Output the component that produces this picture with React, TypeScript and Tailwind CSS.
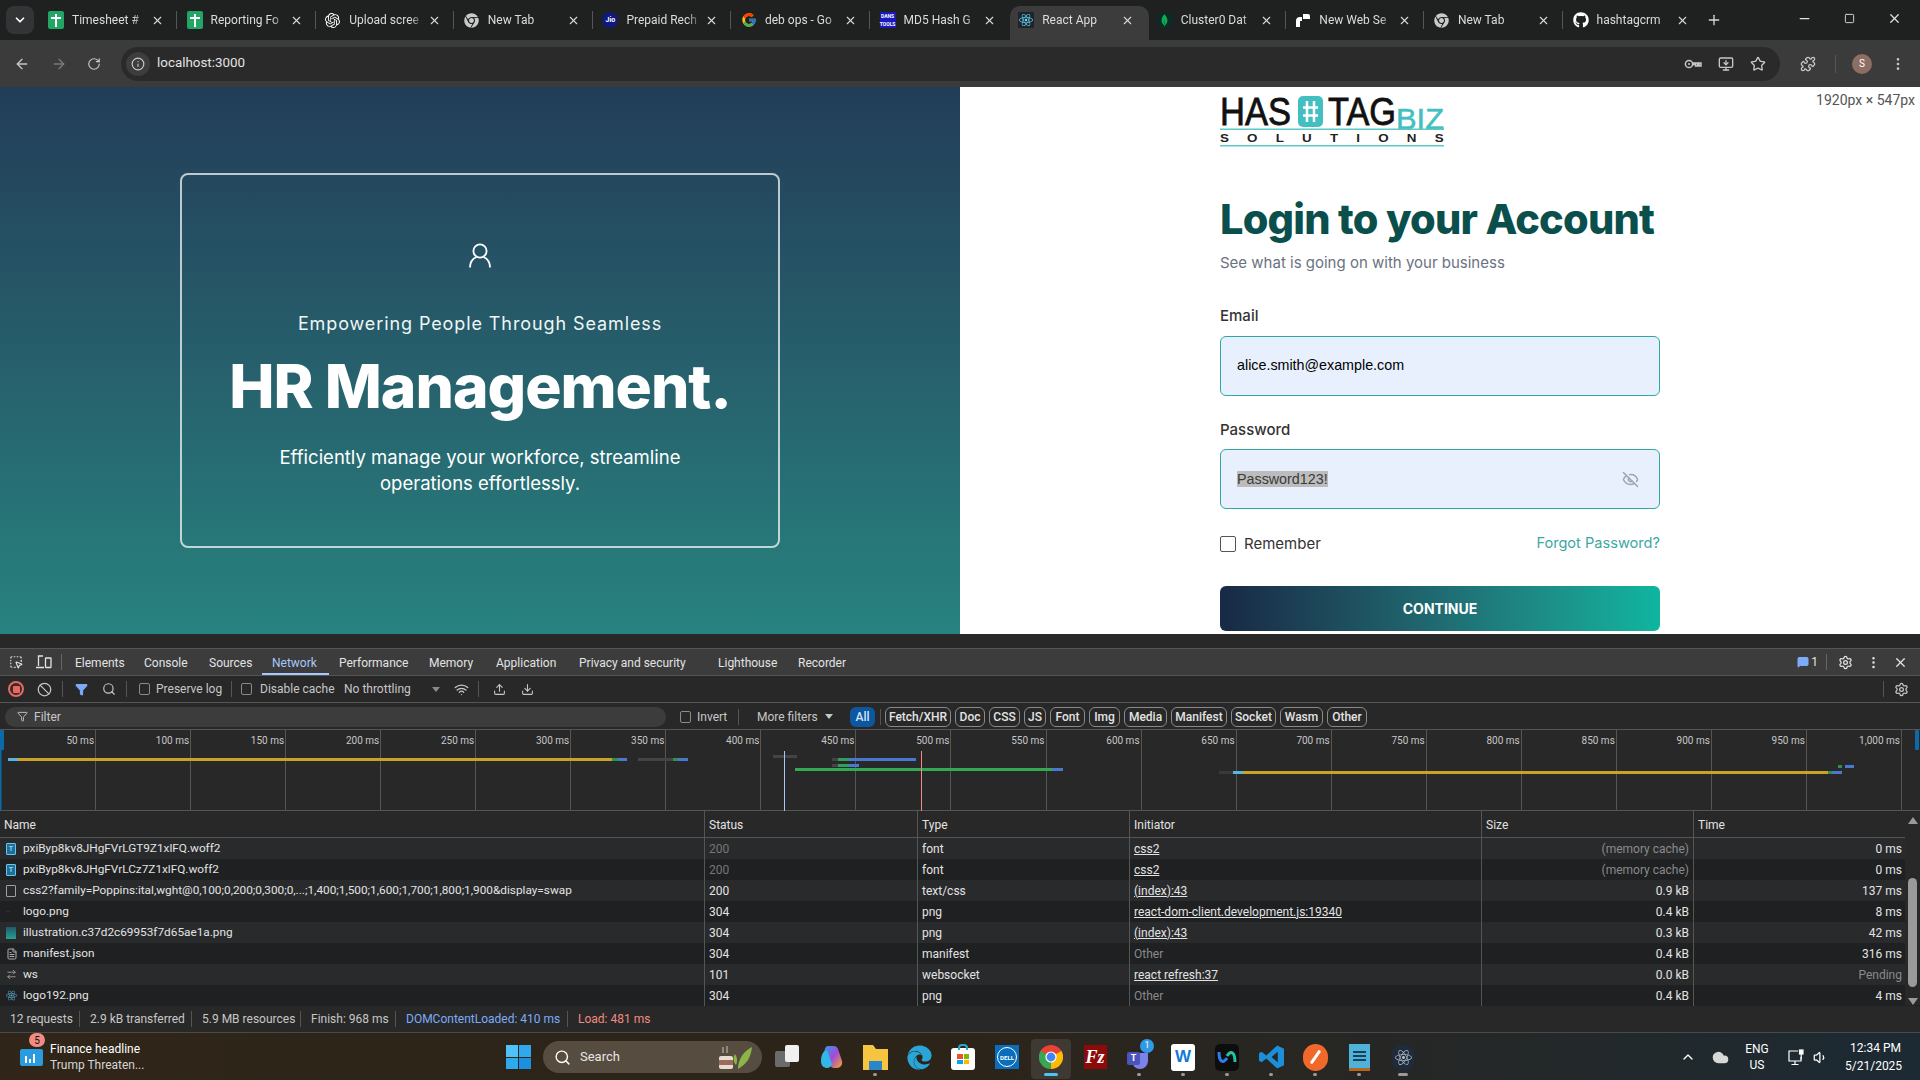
import React from 'react';
import {
  ArrowLeft,
  ArrowRight,
  ChevronDown,
  ChevronUp,
  Ban,
  Download,
  EyeOff,
  FileText,
  Filter,
  Info,
  Minus,
  MoreVertical,
  Plus,
  Puzzle,
  RotateCw,
  Search,
  Settings,
  Square,
  Star,
  Upload,
  Volume1,
  Wifi,
  X,
  MousePointerSquareDashed,
  ArrowRightLeft,
  MonitorDown,
  MessageSquare,
  Cloud,
} from 'lucide-react';
import { FaChrome, FaEdge, FaGithub, FaReact } from 'react-icons/fa';
import { FcGoogle } from 'react-icons/fc';
import { SiMongodb, SiOpenai } from 'react-icons/si';

const poppins = "font-['Inter','Liberation_Sans',sans-serif]";

const ChromeLogo = ({ size = 24 }: { size?: number }) => (
  <svg width={size} height={size} viewBox="0 0 24 24">
    <circle cx="12" cy="12" r="12" fill="#ea4335" />
    <path d="M12 12 1.6 6A12 12 0 0 0 12 24z" fill="#34a853" />
    <path d="M12 12V24A12 12 0 0 0 22.4 6z" fill="#fbbc04" />
    <circle cx="12" cy="12" r="5.6" fill="#fff" />
    <circle cx="12" cy="12" r="4.4" fill="#4285f4" />
  </svg>
);

const SheetsIcon = () => (
  <div className="w-[16px] h-[18px] rounded-[2px] bg-[#23a566] relative">
    <div className="w-[10px] h-[2px] bg-white absolute left-[3px] top-[6px]" />
    <div className="w-[2px] h-[13px] bg-white absolute left-[7px] top-[3px]" />
  </div>
);

const KeyIcon = () => (
  <svg width="18" height="16" viewBox="0 0 18 16" fill="none" stroke="currentColor" strokeWidth="1.5">
    <circle cx="5" cy="8" r="3.6" />
    <circle cx="5" cy="8" r="1" fill="currentColor" stroke="none" />
    <path d="M8.600 7H17v3h-2V8.500h-1.500V10h-2V8.500H8.600" />
  </svg>
);

const DeviceIcon = () => (
  <svg width="16" height="14" viewBox="0 0 16 14" fill="none" stroke="currentColor" strokeWidth="1.3" className="ml-[13px] shrink-0">
    <path d="M7 1H2.500v10M0 12.500h8" />
    <rect x="9.500" y="3" width="5.500" height="9.500" rx="0.5" />
  </svg>
);

const PersonIcon = () => (
  <svg width="22" height="25" viewBox="0 0 22 25" fill="none" stroke="currentColor" strokeWidth="1.8" className="mt-[68px]">
    <circle cx="11" cy="8" r="6.600" />
    <path d="M1 24.500C1 19 4 15.500 7.500 14M21 24.500C21 19 18 15.500 14.500 14" />
  </svg>
);

const NetworkIcon = () => (
  <svg width="17" height="17" viewBox="0 0 17 17" fill="none" stroke="currentColor" strokeWidth="1.2" className="ml-[16px]">
    <path d="M10 2H1v10h12V8M7 12v3M3.500 15.500h7" />
    <rect x="11.500" y="1" width="3.500" height="4" fill="currentColor" />
    <path d="M13.200 5v5.500" />
  </svg>
);

const tabs: { title: string; icon: React.ReactNode; active?: boolean }[] = [
  { title: 'Timesheet #', icon: <SheetsIcon /> },
  { title: 'Reporting Fo', icon: <SheetsIcon /> },
  { title: 'Upload scree', icon: <SiOpenai size={15} className="text-white" /> },
  { title: 'New Tab', icon: <FaChrome size={15} className="text-[#c9c9c9]" /> },
  {
    title: 'Prepaid Rech',
    icon: (
      <div className="w-[16px] h-[16px] rounded-full bg-[#0f1a7a] text-white text-[7px] font-bold flex items-center justify-center">
        Jio
      </div>
    ),
  },
  { title: 'deb ops - Go', icon: <FcGoogle size={16} /> },
  {
    title: 'MD5 Hash G',
    icon: (
      <div className="w-[16px] h-[16px] bg-[#1a1ab8] text-white text-[5px] leading-[8px] font-bold text-center">
        <div>DANS</div>
        <div>TOOLS</div>
      </div>
    ),
  },
  {
    title: 'React App',
    active: true,
    icon: (
      <div className="w-[16px] h-[16px] bg-[#20232a] flex items-center justify-center">
        <FaReact size={14} className="text-[#61dafb]" />
      </div>
    ),
  },
  {
    title: 'Cluster0 Dat',
    icon: (
      <div className="w-[16px] h-[16px] rounded-full bg-[#0b2b26] flex items-center justify-center">
        <SiMongodb size={13} className="text-[#13aa52]" />
      </div>
    ),
  },
  {
    title: 'New Web Se',
    icon: (
      <svg width="16" height="16" viewBox="0 0 16 16">
        <path d="M1 15V9a4 4 0 0 1 4-4h2v4H5v6zM8 2h5a2 2 0 0 1 2 2v3H8z" fill="#fff" />
      </svg>
    ),
  },
  { title: 'New Tab', icon: <FaChrome size={15} className="text-[#c9c9c9]" /> },
  { title: 'hashtagcrm', icon: <FaGithub size={16} className="text-white" /> },
];

const TabStrip = () => (
  <div className="h-[40px] bg-[#1f2020] flex items-center text-[12px] text-[#dcdcdc] shrink-0">
    <div className="w-[40px] pl-[6px] shrink-0">
      <div className="w-[28px] h-[28px] rounded-lg bg-[#333435] flex items-center justify-center">
        <ChevronDown size={14} strokeWidth={3} className="text-white" />
      </div>
    </div>
    {tabs.map((t, i) => (
      <div
        key={i}
        className={
          t.active
            ? 'w-[138.6px] h-[34px] mt-[6px] pb-[6px] shrink-0 flex items-center pl-[8px] bg-[#3c3c3c] rounded-t-[10px]'
            : 'w-[138.6px] h-[34px] mt-[6px] pb-[6px] shrink-0 flex items-center pl-[8px]'
        }
      >
        <div className="w-[24px] shrink-0 flex items-center">{t.icon}</div>
        <div className="w-[76px] overflow-hidden whitespace-nowrap [mask-image:linear-gradient(90deg,#000_80%,transparent)]">
          {t.title}
        </div>
        <X size={13} className="ml-[3px] text-[#d8d8d8] shrink-0" />
        {!t.active && tabs[i + 1] && !tabs[i + 1].active && <div className="w-px h-[18px] bg-[#555] ml-[12px]" />}
      </div>
    ))}
    <Plus size={16} className="ml-[3px] text-[#d8d8d8] shrink-0" />
    <div className="ml-auto flex items-center text-[#e0e0e0] pr-[18px] pb-[4px] gap-[32px]">
      <Minus size={15} />
      <Square size={11} />
      <X size={15} />
    </div>
  </div>
);

const AddressBar = () => (
  <div className="h-[47px] bg-[#3b3b3b] flex items-center shrink-0 text-[#c7c7c7]">
    <ArrowLeft size={16} className="ml-[14px] shrink-0" />
    <ArrowRight size={16} className="ml-[21px] shrink-0 text-[#7b7b7b]" />
    <RotateCw size={14} className="ml-[20px] shrink-0" />
    <div className="ml-[20px] w-[1659px] h-[34px] rounded-full bg-[#2a2a2a] flex items-center pl-[5px] shrink-0">
      <div className="w-[24px] h-[24px] rounded-full bg-[#3d3d3d] flex items-center justify-center">
        <Info size={14} />
      </div>
      <span className="ml-[7px] text-[13.4px] text-[#e3e3e3] font-['Roboto',sans-serif]">localhost:3000</span>
      <div className="ml-auto flex items-center gap-[16px] pr-[14px]">
        <KeyIcon />
        <MonitorDown size={16} />
        <Star size={16} />
      </div>
    </div>
    <Puzzle size={16} className="ml-[20px] shrink-0" />
    <div className="w-px h-[18px] bg-[#555] ml-[19px]" />
    <div className="ml-[16px] w-[20px] h-[20px] rounded-full bg-[#8d6e63] text-white text-[10px] flex items-center justify-center">
      S
    </div>
    <MoreVertical size={16} className="ml-[18px]" />
  </div>
);

const Logo = () => (
  <svg width="224" height="52" viewBox="0 0 224 52" className="block">
    <text x="0" y="30" fontFamily="Liberation Sans" fontSize="39" fill="#111" stroke="#111" strokeWidth="0.8" textLength="71" lengthAdjust="spacingAndGlyphs">
      HAS
    </text>
    <rect x="78" y="1" width="25" height="31" rx="5" fill="#43bfc1" />
    <path d="M87 6v21M94 6v21M83 12.500h15M83 20.500h15" stroke="#fff" strokeWidth="2.500" />
    <text x="108" y="30" fontFamily="Liberation Sans" fontSize="39" fill="#111" stroke="#111" strokeWidth="0.8" textLength="68" lengthAdjust="spacingAndGlyphs">
      TAG
    </text>
    <text x="176" y="33.500" fontFamily="Liberation Sans" fontSize="29" fill="#43bfc1" stroke="#43bfc1" strokeWidth="0.5" textLength="48" lengthAdjust="spacingAndGlyphs">
      BIZ
    </text>
    <rect x="0" y="33.500" width="224" height="1.5" fill="#5cc8c8" />
    <g transform="scale(1.3 1)">
      <text x="0" y="47" fontFamily="Liberation Sans" fontSize="10.300" fontWeight="700" fill="#222" textLength="172">
        SOLUTIONS
      </text>
    </g>
    <rect x="0" y="50" width="224" height="1.5" fill="#5cc8c8" />
  </svg>
);

const LoginPage = () => (
  <div className="h-[547px] flex shrink-0 overflow-hidden relative bg-white">
    <div className="w-[960px] shrink-0 bg-gradient-to-b from-[#223d58] to-[#27837f] pt-[86px] pl-[180px]">
      <div className="w-[600px] h-[375px] border-2 border-white/70 rounded-lg flex flex-col items-center text-white">
        <PersonIcon />
        <div className={`${poppins} mt-[43px] text-[18px] leading-[26px] tracking-[0.9px] text-[#eef6f6]`}>
          Empowering People Through Seamless
        </div>
        <div className={`${poppins} mt-[15px] text-[60.5px] leading-[68px] font-extrabold tracking-[-1px]`}>HR Management.</div>
        <div className={`${poppins} mt-[24px] text-[18.5px] leading-[26px] text-center w-[430px]`}>
          Efficiently manage your workforce, streamline operations effortlessly.
        </div>
      </div>
    </div>
    <div className="flex-1 pl-[260px] pt-[8px]">
      <div className="w-[440px]">
        <Logo />
        <h1 className={`${poppins} mt-[46px] text-[41.5px] leading-[52px] font-extrabold text-[#0a4f4c] tracking-[-0.8px] whitespace-nowrap`}>
          Login to your Account
        </h1>
        <p className={`${poppins} mt-[6px] text-[15px] leading-[24px] text-[#6b7280]`}>See what is going on with your business</p>
        <label className={`${poppins} block mt-[29px] text-[15px] leading-[24px] font-medium text-[#333]`}>Email</label>
        <div className="mt-[8px] h-[60px] rounded-md border-[1.5px] border-[#2da8a3] bg-[#e8f0fe] flex items-center pl-[16px] font-['Liberation_Sans',sans-serif] text-[14.3px] text-black">
          alice.smith@example.com
        </div>
        <label className={`${poppins} block mt-[22px] text-[15px] leading-[24px] font-medium text-[#333]`}>Password</label>
        <div className="mt-[7px] h-[60px] rounded-md border-[1.5px] border-[#2da8a3] bg-[#e8f0fe] flex items-center pl-[16px] pr-[20px] font-['Liberation_Sans',sans-serif] text-[14.3px] text-[#3a3a3a]">
          <span className="bg-[#bcbcbc] leading-[16px]">Password123!</span>
          <EyeOff size={17} className="ml-auto text-[#9ca3af]" />
        </div>
        <div className="mt-[26px] h-[18px] flex items-center">
          <div className="w-[16px] h-[16px] border border-[#555] rounded-[2px]" />
          <span className={`${poppins} ml-[8px] text-[15px] text-[#333]`}>Remember</span>
          <span className={`${poppins} ml-auto text-[14.6px] text-[#3da89f]`}>Forgot Password?</span>
        </div>
        <div className="mt-[33px] h-[45px] rounded-md bg-gradient-to-r from-[#182945] to-[#0eb5a0] flex items-center justify-center font-['Inter',sans-serif] text-[14px] font-bold text-white">
          CONTINUE
        </div>
      </div>
    </div>
    <div className="absolute right-[5px] top-[5px] bg-white text-[14px] leading-[16px] text-[#555] font-['Roboto',sans-serif]">
      1920px × 547px
    </div>
  </div>
);

const devTabs: [string, number][] = [
  ['Elements', 69],
  ['Console', 65],
  ['Sources', 63],
  ['Network', 67],
  ['Performance', 90],
  ['Memory', 67],
  ['Application', 83],
  ['Privacy and security', 139],
  ['Lighthouse', 80],
  ['Recorder', 70],
];

const DevTabs = () => (
  <div className="h-[28px] bg-[#3c3c3c] border-t border-b border-[#555] flex items-center shrink-0 text-[#e3e3e3]">
    <MousePointerSquareDashed size={14} className="ml-[9px] shrink-0" />
    <DeviceIcon />
    <div className="w-px h-[16px] bg-[#666] ml-[9px]" />
    <div className="ml-[13px] flex h-full">
      {devTabs.map(([name, w]) => (
        <div
          key={name}
          style={{ width: w }}
          className={
            name === 'Network'
              ? 'h-full flex items-center relative pt-[2px] text-[#a8c7fa]'
              : 'h-full flex items-center relative pt-[2px]'
          }
        >
          {name}
          {name === 'Network' && <div className="absolute -left-[10px] w-[67px] bottom-0 h-[2px] bg-[#a8c7fa]" />}
        </div>
      ))}
    </div>
    <div className="ml-auto flex items-center pr-[12px]">
      <MessageSquare size={12} className="text-[#7cacf8] fill-[#7cacf8]" />
      <span className="ml-[2px]">1</span>
      <div className="w-px h-[16px] bg-[#666] ml-[8px]" />
      <Settings size={15} className="ml-[11px]" />
      <MoreVertical size={15} className="ml-[13px]" />
      <X size={15} className="ml-[12px]" />
    </div>
  </div>
);

const CheckBox = () => <div className="w-[11px] h-[12px] rounded-[2px] border border-[#8a8a8a] shrink-0" />;
const Sep = ({ cls }: { cls: string }) => <div className={`w-px h-[16px] bg-[#555] shrink-0 ${cls}`} />;

const DevToolbar = () => (
  <div className="h-[27px] bg-[#282828] border-b border-[#555] flex items-center shrink-0 text-[#c7c7c7]">
    <div className="ml-[8px] w-[16px] h-[16px] rounded-full border-2 border-[#e46962] bg-[#3a2a2a] flex items-center justify-center shrink-0">
      <div className="w-[7px] h-[7px] bg-[#e46962] rounded-[1px]" />
    </div>
    <Ban size={15} className="ml-[13px] shrink-0" />
    <Sep cls="ml-[10px]" />
    <Filter size={13} className="ml-[12px] shrink-0 text-[#7cacf8] fill-[#7cacf8]" />
    <Search size={14} className="ml-[14px] shrink-0" />
    <Sep cls="ml-[10px]" />
    <div className="ml-[12px]"><CheckBox /></div>
    <span className="ml-[6px] w-[75px]">Preserve log</span>
    <Sep cls="" />
    <div className="ml-[9px]"><CheckBox /></div>
    <span className="ml-[8px] w-[84px]">Disable cache</span>
    <span className="w-[88px]">No throttling</span>
    <div className="border-x-[4px] border-x-transparent border-t-[5px] border-t-[#8a8a8a]" />
    <Wifi size={15} className="ml-[14px] shrink-0" />
    <Sep cls="ml-[9px]" />
    <Upload size={13} className="ml-[14px] shrink-0" />
    <Download size={13} className="ml-[15px] shrink-0" />
    <div className="ml-auto flex items-center pr-[11px]">
      <Sep cls="" />
      <Settings size={15} className="ml-[10px]" />
    </div>
  </div>
);

const pills: [string, number][] = [
  ['Fetch/XHR', 66],
  ['Doc', 30],
  ['CSS', 31],
  ['JS', 22],
  ['Font', 35],
  ['Img', 31],
  ['Media', 43],
  ['Manifest', 56],
  ['Socket', 45],
  ['Wasm', 43],
  ['Other', 40],
];

const FilterRow = () => (
  <div className="h-[27px] bg-[#282828] border-b border-[#555] flex items-center shrink-0 text-[#c7c7c7] pt-[1px]">
    <div className="ml-[5px] w-[661px] h-[20px] rounded-full bg-[#3c3c3c] flex items-center pl-[12px] shrink-0">
      <Filter size={11} />
      <span className="ml-[6px]">Filter</span>
    </div>
    <div className="ml-[14px]"><CheckBox /></div>
    <span className="ml-[6px] w-[41px]">Invert</span>
    <Sep cls="" />
    <span className="ml-[18px] w-[68px]">More filters</span>
    <div className="border-x-[4px] border-x-transparent border-t-[5px] border-t-[#c7c7c7]" />
    <div className="ml-[17px] w-[25px] h-[20px] rounded-md bg-[#0b57a0] text-[#d3e3fd] font-medium flex items-center justify-center shrink-0">
      All
    </div>
    <Sep cls="ml-[5px]" />
    <div className="ml-[4px] flex gap-[4px]">
      {pills.map(([p, w]) => (
        <div
          key={p}
          style={{ width: w }}
          className="h-[20px] rounded-md border border-[#8a8a8a] text-[#e3e3e3] font-medium flex items-center justify-center shrink-0"
        >
          {p}
        </div>
      ))}
    </div>
  </div>
);

const ticks = ['50 ms', '100 ms', '150 ms', '200 ms', '250 ms', '300 ms', '350 ms', '400 ms', '450 ms', '500 ms', '550 ms', '600 ms', '650 ms', '700 ms', '750 ms', '800 ms', '850 ms', '900 ms', '950 ms', '1,000 ms'];

// x, width, y, colour of every waterfall segment
const bars: [number, number, number, string][] = [
  [8, 10, 757, '#5bb4dc'],
  [18, 594, 757, '#c9a227'],
  [612, 6, 757, '#2f8f4f'],
  [618, 9, 757, '#4a78d0'],
  [638, 35, 757, '#444'],
  [673, 5, 757, '#2f8f4f'],
  [678, 10, 757, '#4a78d0'],
  [773, 24, 754, '#444'],
  [832, 6, 757, '#444'],
  [838, 11, 757, '#2f9f5f'],
  [849, 67, 757, '#4a78d0'],
  [832, 6, 763, '#444'],
  [838, 11, 763, '#2f9f5f'],
  [849, 10, 763, '#4a78d0'],
  [795, 257, 767, '#34a853'],
  [1052, 11, 767, '#4a78d0'],
  [1219, 14, 770, '#3a3a3a'],
  [1233, 10, 770, '#5bb4dc'],
  [1243, 585, 770, '#c9a227'],
  [1828, 4, 770, '#2f8f4f'],
  [1832, 10, 770, '#4a78d0'],
  [1838, 4, 764, '#2f8f4f'],
  [1845, 9, 764, '#4a78d0'],
];

const Overview = () => (
  <div className="h-[81px] bg-[#282828] border-b border-[#555] flex relative shrink-0 text-[#c7c7c7] text-[10px] pl-[1px]">
    {ticks.map((t) => (
      <div key={t} className="w-[95.05px] h-full border-r border-[#555] text-right pr-[1px] pt-[3px] shrink-0 leading-[16px]">
        {t}
      </div>
    ))}
    <svg width="1920" height="81" viewBox="0 729 1920 81" className="absolute left-0 top-0">
      {bars.map(([x, w, y, c], i) => (
        <rect key={i} x={x} y={y} width={w} height={3} fill={c} />
      ))}
      <rect x="784" y="750" width="1" height="60" fill="#a8c7fa" />
      <rect x="921" y="750" width="1" height="60" fill="#f28b82" />
      <rect x="0" y="729" width="4" height="20" rx="1" fill="#0b6aa8" />
      <rect x="0" y="729" width="1.5" height="81" fill="#0b6aa8" />
      <rect x="1915" y="729" width="4" height="20" rx="1" fill="#0b6aa8" />
    </svg>
  </div>
);

const gridCols = 'grid grid-cols-[705px_213px_212px_352px_212px_211px]';

const fileIcons: Record<string, React.ReactNode> = {
  font: (
    <div className="w-[10px] h-[12px] bg-[#1c6f99] border border-[#6fc3ec] text-[8px] leading-[10px] text-[#bfe6fa] text-center rounded-[1px]">T</div>
  ),
  doc: <div className="w-[10px] h-[12px] border border-[#a0a0a0] rounded-[1px]" />,
  logo: <div className="w-[10px] text-[7px] leading-[10px] text-[#4d5a5a]">··</div>,
  illus: <div className="w-[10px] h-[12px] bg-gradient-to-b from-[#1f5a6a] to-[#27a08f]" />,
  manifest: <FileText size={12} className="text-[#b0b0b0]" />,
  ws: <ArrowRightLeft size={11} className="text-[#a0a0a0]" />,
  react: <FaReact size={11} className="text-[#5aa7c9]" />,
};

const rows = [
  { icon: 'font', name: 'pxiByp8kv8JHgFVrLGT9Z1xlFQ.woff2', status: '200', dimStatus: true, type: 'font', init: 'css2', size: '(memory cache)', dimSize: true, time: '0 ms' },
  { icon: 'font', name: 'pxiByp8kv8JHgFVrLCz7Z1xlFQ.woff2', status: '200', dimStatus: true, type: 'font', init: 'css2', size: '(memory cache)', dimSize: true, time: '0 ms' },
  { icon: 'doc', name: 'css2?family=Poppins:ital,wght@0,100;0,200;0,300;0,...;1,400;1,500;1,600;1,700;1,800;1,900&display=swap', status: '200', type: 'text/css', init: '(index):43', size: '0.9 kB', time: '137 ms' },
  { icon: 'logo', name: 'logo.png', status: '304', type: 'png', init: 'react-dom-client.development.js:19340', size: '0.4 kB', time: '8 ms' },
  { icon: 'illus', name: 'illustration.c37d2c69953f7d65ae1a.png', status: '304', type: 'png', init: '(index):43', size: '0.3 kB', time: '42 ms' },
  { icon: 'manifest', name: 'manifest.json', status: '304', type: 'manifest', init: 'Other', dimInit: true, size: '0.4 kB', time: '316 ms' },
  { icon: 'ws', name: 'ws', status: '101', type: 'websocket', init: 'react refresh:37', size: '0.0 kB', time: 'Pending', dimTime: true },
  { icon: 'react', name: 'logo192.png', status: '304', type: 'png', init: 'Other', dimInit: true, size: '0.4 kB', time: '4 ms' },
];

const NetworkTable = () => (
  <div className="h-[195px] shrink-0 relative border-b border-[#555] text-[#e3e3e3]">
    <div className={`${gridCols} h-[27px] bg-[#282828] border-b border-[#555] items-center`}>
      {['Name', 'Status', 'Type', 'Initiator', 'Size', 'Time'].map((h, i) => (
        <div key={h} className={i < 5 ? 'h-full flex items-center pt-[1px] px-[4px] border-r border-[#555]' : 'h-full flex items-center pt-[1px] px-[4px]'}>
          {h}
        </div>
      ))}
    </div>
    {rows.map((r, i) => (
      <div key={i} className={`${gridCols} h-[21px] ${i % 2 === 0 ? 'bg-[#292a2c]' : 'bg-[#1f2021]'}`}>
        <div className="flex items-center pl-[6px] border-r border-[#555] whitespace-nowrap overflow-hidden text-[11.8px]">
          <div className="w-[17px] shrink-0 flex items-center">{fileIcons[r.icon]}</div>
          {r.name}
        </div>
        <div className={r.dimStatus ? 'flex items-center px-[4px] border-r border-[#555] text-[#777]' : 'flex items-center px-[4px] border-r border-[#555]'}>{r.status}</div>
        <div className="flex items-center px-[4px] border-r border-[#555]">{r.type}</div>
        <div className={r.dimInit ? 'flex items-center px-[4px] border-r border-[#555] text-[#8a8a8a]' : 'flex items-center px-[4px] border-r border-[#555] underline'}>{r.init}</div>
        <div className={r.dimSize ? 'flex items-center justify-end px-[4px] border-r border-[#555] text-[#8a8a8a]' : 'flex items-center justify-end px-[4px] border-r border-[#555]'}>{r.size}</div>
        <div className={r.dimTime ? 'flex items-center justify-end px-[3px] text-[#8a8a8a]' : 'flex items-center justify-end px-[3px]'}>{r.time}</div>
      </div>
    ))}
    <div className="absolute right-0 top-0 bottom-0 w-[15px] bg-[#282828] flex flex-col items-center">
      <div className="mt-[6px] border-x-[5px] border-x-transparent border-b-[7px] border-b-[#9a9a9a]" />
      <div className="mt-[54px] w-[9px] h-[109px] rounded-full bg-[#9a9a9a]" />
      <div className="mt-[11px] border-x-[5px] border-x-transparent border-t-[7px] border-t-[#9a9a9a]" />
    </div>
  </div>
);

const statusItems: [string, number, string][] = [
  ['12 requests', 80, ''],
  ['2.9 kB transferred', 112, ''],
  ['5.9 MB resources', 109, ''],
  ['Finish: 968 ms', 95, ''],
  ['DOMContentLoaded: 410 ms', 172, 'text-[#7cacf8]'],
  ['Load: 481 ms', 90, 'text-[#f28b82]'],
];

const StatusBar = () => (
  <div className="h-[27px] bg-[#282828] border-b border-[#4a4a4a] flex items-center shrink-0 text-[#c7c7c7] pl-[10px]">
    {statusItems.map(([s, w, c], i) => (
      <div key={s} style={{ width: w }} className={`shrink-0 flex items-center ${c}`}>
        <span className={i === 5 ? 'whitespace-nowrap' : 'whitespace-nowrap flex-1'}>{s}</span>
        {i < 5 && <div className="w-px h-[16px] bg-[#555] mr-[10px]" />}
      </div>
    ))}
  </div>
);

type Cell = { icon: React.ReactNode; dot?: boolean; wide?: boolean; active?: boolean };

const cells: Cell[] = [
  {
    icon: (
      <div className="relative w-[25px] h-[24px]">
        <div className="absolute left-0 top-[6px] w-[15px] h-[16px] bg-[#6b6b6b] rounded-[2px]" />
        <div className="absolute right-[1px] top-0 w-[14px] h-[17px] bg-[#f0f0f0] rounded-[2px]" />
      </div>
    ),
  },
  {
    icon: (
      <svg width="23" height="24" viewBox="0 0 23 24">
        <defs>
          <linearGradient id="cp" x1="0" y1="0" x2="1" y2="1">
            <stop offset="0" stopColor="#2f9be8" />
            <stop offset="0.5" stopColor="#a44bd8" />
            <stop offset="1" stopColor="#f5a623" />
          </linearGradient>
        </defs>
        <path d="M8 1h6c2 0 3 1 4 3l4 12c1 4-2 7-5 7h-3c-2 0-3-1-4-3L5 8C4 5 5 1 8 1z" fill="url(#cp)" />
        <path d="M1 16C1 9 4 5 7 5l5 14c-1 3-3 4-5 4-3 0-6-2-6-7z" fill="#35b6e8" />
      </svg>
    ),
  },
  {
    dot: true,
    icon: (
      <svg width="27" height="27" viewBox="0 0 27 27">
        <path d="M1 1h10l3 4h12v21H1z" fill="#f5c542" />
        <rect x="7" y="17" width="13" height="9" fill="#2a86c9" />
      </svg>
    ),
  },
  { icon: <FaEdge size={25} className="text-[#2aa5d8]" /> },
  {
    icon: (
      <div className="w-[24px] h-[22px] mt-[4px] bg-white rounded-[3px] grid grid-cols-2 gap-[1px] p-[6px] relative">
        <div className="absolute -top-[4px] left-[7px] w-[10px] h-[6px] border-2 border-b-0 border-[#2ba5c9] rounded-t-sm" />
        <div className="bg-[#f25022]" />
        <div className="bg-[#7fba00]" />
        <div className="bg-[#00a4ef]" />
        <div className="bg-[#ffb900]" />
      </div>
    ),
  },
  {
    icon: (
      <div className="w-[24px] h-[24px] bg-[#0a6ebd] flex items-center justify-center">
        <div className="w-[20px] h-[20px] rounded-full border border-white text-white text-[6px] font-bold flex items-center justify-center">DELL</div>
      </div>
    ),
  },
  { active: true, icon: <ChromeLogo /> },
  {
    icon: (
      <div className="w-[23px] h-[24px] bg-[#8c0a0a] flex items-center justify-center font-['Liberation_Serif',serif] italic font-bold text-white text-[18px]">
        Fz
      </div>
    ),
  },
  {
    dot: true,
    icon: (
      <div className="relative w-[24px] h-[24px]">
        <div className="absolute left-[5px] top-[8px] w-[16px] h-[16px] rounded-b-lg bg-[#7b83eb]" />
        <div className="absolute left-0 top-[7px] w-[13px] h-[13px] rounded-[2px] bg-[#4b53bc] text-white text-[9px] font-bold flex items-center justify-center">T</div>
        <div className="absolute left-[13px] -top-[6px] w-[14px] h-[14px] rounded-full bg-[#2f9be8] text-white text-[9px] flex items-center justify-center">1</div>
      </div>
    ),
  },
  {
    dot: true,
    icon: (
      <div className="w-[24px] h-[27px] rounded-[3px] bg-white text-[#1479d4] font-['Liberation_Sans',sans-serif] font-black text-[17px] flex items-center justify-center">
        W
      </div>
    ),
  },
  {
    dot: true,
    icon: (
      <div className="w-[24px] h-[27px] rounded-[5px] bg-[#0d0d0d] flex items-center justify-center">
        <svg width="20" height="16" viewBox="0 0 20 16" fill="none" strokeWidth="3">
          <path d="M2 3c0 10 4 12 8 6" stroke="#2d7ff0" />
          <path d="M18 13c0-10-4-12-8-6" stroke="#22c4a6" />
        </svg>
      </div>
    ),
  },
  {
    dot: true,
    icon: (
      <svg width="25" height="26" viewBox="0 0 24 24">
        <path d="M17.500 1 24 4v16l-6.500 3L7 13.500 2.500 17 0 15.500V8.500L2.500 7 7 10.500zM18 7l-6 5 6 5z" fill="#1b8fd8" fillRule="evenodd" />
      </svg>
    ),
  },
  {
    dot: true,
    icon: (
      <div className="w-[25px] h-[27px] rounded-full bg-[#f0692a] flex items-center justify-center">
        <div className="w-[3px] h-[16px] bg-white rotate-[35deg] rounded-sm" />
      </div>
    ),
  },
  {
    dot: true,
    icon: (
      <div className="w-[21px] h-[27px] bg-[#4fb3d9] flex flex-col items-center justify-center gap-[2px] border-b-[3px] border-[#b5651d]">
        <div className="w-[13px] h-[2px] bg-[#16425b]" />
        <div className="w-[13px] h-[2px] bg-[#16425b]" />
        <div className="w-[13px] h-[2px] bg-[#16425b]" />
      </div>
    ),
  },
  {
    dot: true,
    wide: true,
    icon: (
      <div className="w-[24px] h-[27px] rounded-full bg-[#1f2a3a] flex items-center justify-center">
        <FaReact size={17} className="text-[#b0bcc8]" />
      </div>
    ),
  },
];

const Taskbar = () => (
  <div className="h-[48px] flex-1 flex items-center bg-gradient-to-r from-[#2f2519] via-[#2c2419] to-[#1c2a33] text-white font-['Roboto',sans-serif] text-[12px]">
    <div className="w-[506px] shrink-0 flex items-center pl-[20px] relative">
      <div className="w-[23px] h-[17px] bg-[#2b9be0] rounded-[2px] flex items-end gap-[2px] px-[5px] pb-[3px]">
        <div className="w-[2px] h-[7px] bg-white" />
        <div className="w-[2px] h-[4px] bg-white" />
        <div className="w-[2px] h-[9px] bg-white" />
      </div>
      <div className="absolute left-[29px] top-[-8px] w-[16px] h-[14px] rounded-full bg-[#f28b82] text-[10px] text-[#111] flex items-center justify-center">5</div>
      <div className="ml-[7px] leading-[16px]">
        <div>Finance headline</div>
        <div className="text-[#d5d5d5]">Trump Threaten...</div>
      </div>
    </div>
    <div className="w-[25px] h-[24px] grid grid-cols-2 gap-[1px] shrink-0">
      <div className="bg-[#4fc3f7]" />
      <div className="bg-[#2fa9ee]" />
      <div className="bg-[#2fa9ee]" />
      <div className="bg-[#1b8fe0]" />
    </div>
    <div className="ml-[12px] w-[219px] h-[32px] rounded-full bg-[#574c40] flex items-center pl-[11px] shrink-0">
      <Search size={17} />
      <span className="ml-[9px] text-[13px] text-[#e6e6e6]">Search</span>
      <svg width="40" height="28" viewBox="0 0 40 28" className="ml-auto mr-[6px]">
        <rect x="3" y="13" width="14" height="13" rx="2" fill="#e8dcd0" />
        <rect x="3" y="17" width="14" height="5" fill="#9c6b5a" />
        <path d="M7 4v6M11 3v7" stroke="#cfc4b8" strokeWidth="1" />
        <path d="M22 26c0-10 6-18 14-22-1 10-5 17-14 22zM20 22c-3-3-3-8-1-11 2 3 3 7 1 11z" fill="#8ab648" />
      </svg>
    </div>
    <div className="ml-[3px] flex shrink-0">
      {cells.map((c, i) => (
        <div key={i} className="w-[44px] h-[48px] flex items-center justify-center relative">
          {c.active && <div className="absolute left-[2px] top-[6px] w-[40px] h-[40px] rounded-[4px] bg-[#3e3a33]" />}
          <div className="relative">{c.icon}</div>
          {c.dot && <div className={c.wide ? 'absolute bottom-[5px] left-[17px] w-[10px] h-[3px] rounded-full bg-[#9a9a9a]' : 'absolute bottom-[5px] left-[20px] w-[4px] h-[3px] rounded-full bg-[#9a9a9a]'} />}
          {c.active && <div className="absolute bottom-[5px] left-[15px] w-[14px] h-[3px] rounded-full bg-[#4fc3f7]" />}
        </div>
      ))}
    </div>
    <div className="ml-auto pr-[19px] flex items-center">
      <ChevronUp size={16} />
      <Cloud size={17} className="ml-[16px] fill-[#d8d8d8] text-[#d8d8d8]" />
      <div className="ml-[13px] w-[30px] text-center leading-[16px]">
        <div>ENG</div>
        <div>US</div>
      </div>
      <NetworkIcon />
      <Volume1 size={15} className="ml-[8px]" />
      <div className="ml-[17px] w-[56px] text-right leading-[18px] whitespace-nowrap">
        <div>12:34 PM</div>
        <div>5/21/2025</div>
      </div>
    </div>
  </div>
);

const App: React.FC = () => {
  return (
    <div className="w-[1920px] h-[1080px] overflow-hidden flex flex-col bg-[#282828] font-['Roboto',sans-serif] text-[12px]">
      <TabStrip />
      <AddressBar />
      <LoginPage />
      <div className="h-[14px] bg-[#282828] shrink-0" />
      <DevTabs />
      <DevToolbar />
      <FilterRow />
      <Overview />
      <NetworkTable />
      <StatusBar />
      <Taskbar />
    </div>
  );
};

export default App;
